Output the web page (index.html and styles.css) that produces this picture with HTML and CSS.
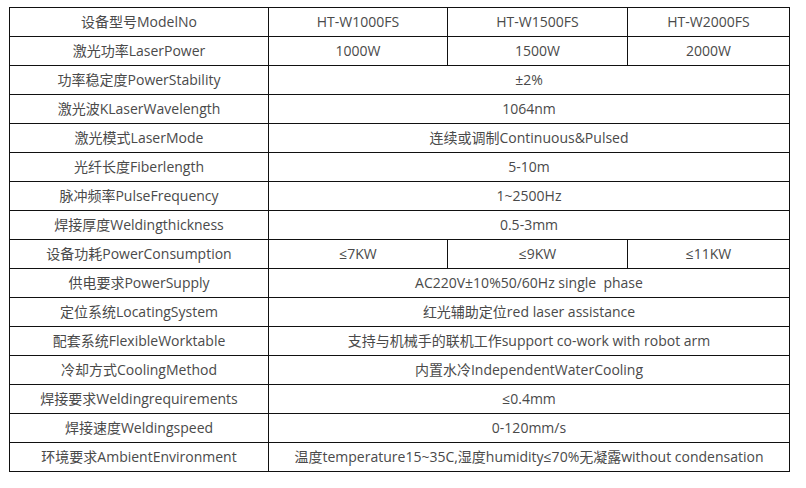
FILE: index.html
```html
<!DOCTYPE html>
<html lang="zh">
<head>
<meta charset="utf-8">
<link rel="stylesheet" href="styles.css">
</head>
<body>
<table class="spec">
<colgroup><col class="c1"><col class="c2"><col class="c3"><col class="c4"></colgroup>
<tbody>
<tr><td>设备型号ModelNo</td><td>HT-W1000FS</td><td>HT-W1500FS</td><td>HT-W2000FS</td></tr>
<tr><td>激光功率LaserPower</td><td>1000W</td><td>1500W</td><td>2000W</td></tr>
<tr><td>功率稳定度PowerStability</td><td colspan="3">±2%</td></tr>
<tr><td>激光波KLaserWavelength</td><td colspan="3">1064nm</td></tr>
<tr><td>激光模式LaserMode</td><td colspan="3">连续或调制Continuous&amp;Pulsed</td></tr>
<tr><td>光纤长度Fiberlength</td><td colspan="3">5-10m</td></tr>
<tr><td>脉冲频率PulseFrequency</td><td colspan="3">1~2500Hz</td></tr>
<tr><td>焊接厚度Weldingthickness</td><td colspan="3">0.5-3mm</td></tr>
<tr><td>设备功耗PowerConsumption</td><td>≤7KW</td><td>≤9KW</td><td>≤11KW</td></tr>
<tr><td>供电要求PowerSupply</td><td colspan="3">AC220V±10%50/60Hz single&nbsp; phase</td></tr>
<tr><td>定位系统LocatingSystem</td><td colspan="3">红光辅助定位red laser assistance</td></tr>
<tr><td>配套系统FlexibleWorktable</td><td colspan="3">支持与机械手的联机工作support co-work with robot arm</td></tr>
<tr><td>冷却方式CoolingMethod</td><td colspan="3">内置水冷IndependentWaterCooling</td></tr>
<tr><td>焊接要求Weldingrequirements</td><td colspan="3">≤0.4mm</td></tr>
<tr><td>焊接速度Weldingspeed</td><td colspan="3">0-120mm/s</td></tr>
<tr><td>环境要求AmbientEnvironment</td><td colspan="3">温度temperature15~35C,湿度humidity≤70%无凝露without condensation</td></tr>
</tbody>
</table>
</body>
</html>
```
FILE: styles.css
```css
html, body {
  margin: 0;
  padding: 0;
  background: #fff;
}
body {
  padding: 7px 0 0 9px;
  font-family: "Open Sans", "Noto Sans CJK SC", sans-serif;
  font-size: 14px;
  color: #4a4a4a;
}
.spec {
  border-collapse: collapse;
  table-layout: fixed;
  width: 780px;
}
.c1 { width: 259px; }
.c2 { width: 179px; }
.c3 { width: 180px; }
.c4 { width: 162px; }
.spec td {
  border: 1px solid #111;
  height: 28px;
  padding: 0;
  text-align: center;
  vertical-align: middle;
  white-space: nowrap;
  line-height: 28px;
}
```
